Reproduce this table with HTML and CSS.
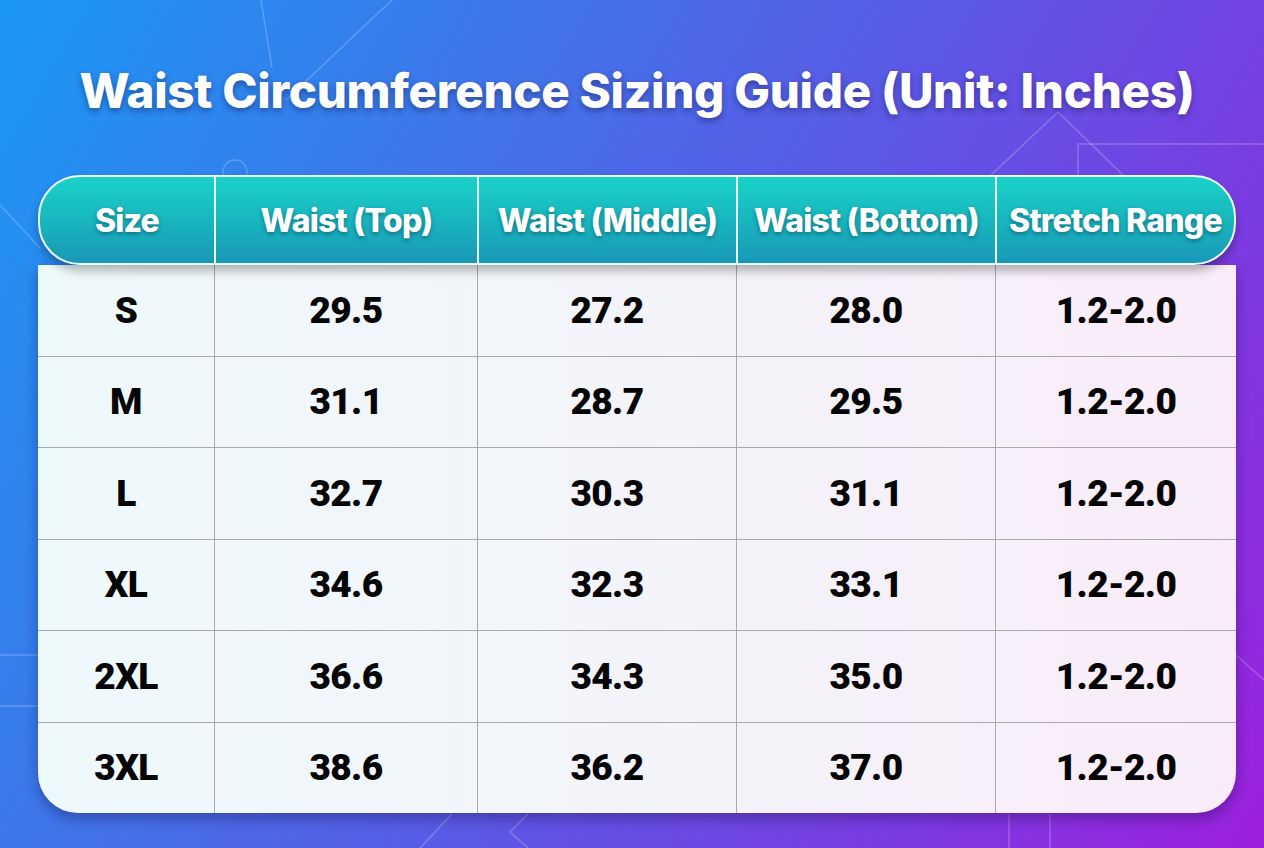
FILE: index.html
```html
<!DOCTYPE html>
<html lang="en">
<head>
<meta charset="utf-8">
<title>Waist Circumference Sizing Guide</title>
<link rel="stylesheet" href="styles.css">
</head>
<body>
<main class="page">
  <svg class="deco" width="1264" height="848" viewBox="0 0 1264 848" aria-hidden="true">
    <g fill="none" stroke="rgba(255,255,255,0.22)" stroke-width="1.5">
      <line x1="261" y1="0" x2="272" y2="68"/>
      <line x1="392" y1="0" x2="286" y2="100"/>
      <circle cx="235" cy="172" r="12"/>
      <line x1="0" y1="205" x2="40" y2="248"/>
      <line x1="0" y1="655" x2="38" y2="655"/>
      <line x1="0" y1="706" x2="38" y2="706"/>
      <polyline points="990,176 1058,112 1124,176"/>
      <polyline points="1078,176 1078,144 1264,144"/>
      <line x1="1236" y1="655" x2="1264" y2="680"/>
      <line x1="452" y1="814" x2="420" y2="848"/>
      <polyline points="528,814 510,832 528,848"/>
      <line x1="1009" y1="814" x2="1009" y2="848"/>
      <line x1="1050" y1="814" x2="1050" y2="848"/>
    </g>
  </svg>
  <h1 class="title">Waist Circumference Sizing Guide (Unit: Inches)</h1>
  <section class="chart">
    <div class="head">
      <div class="hcell">Size</div>
      <div class="hcell">Waist (Top)</div>
      <div class="hcell">Waist (Middle)</div>
      <div class="hcell">Waist (Bottom)</div>
      <div class="hcell">Stretch Range</div>
    </div>
    <div class="body">
      <div class="row"><div class="cell">S</div><div class="cell">29.5</div><div class="cell">27.2</div><div class="cell">28.0</div><div class="cell">1.2-2.0</div></div>
      <div class="row"><div class="cell">M</div><div class="cell">31.1</div><div class="cell">28.7</div><div class="cell">29.5</div><div class="cell">1.2-2.0</div></div>
      <div class="row"><div class="cell">L</div><div class="cell">32.7</div><div class="cell">30.3</div><div class="cell">31.1</div><div class="cell">1.2-2.0</div></div>
      <div class="row"><div class="cell">XL</div><div class="cell">34.6</div><div class="cell">32.3</div><div class="cell">33.1</div><div class="cell">1.2-2.0</div></div>
      <div class="row"><div class="cell">2XL</div><div class="cell">36.6</div><div class="cell">34.3</div><div class="cell">35.0</div><div class="cell">1.2-2.0</div></div>
      <div class="row"><div class="cell">3XL</div><div class="cell">38.6</div><div class="cell">36.2</div><div class="cell">37.0</div><div class="cell">1.2-2.0</div></div>
    </div>
  </section>
</main>
</body>
</html>
```
FILE: styles.css
```css
html, body {
  margin: 0;
  padding: 0;
}
body {
  width: 1264px;
  height: 848px;
  overflow: hidden;
  font-family: "Inter", "Open Sans", "Liberation Sans", sans-serif;
}
.page {
  position: relative;
  width: 1264px;
  height: 848px;
  box-sizing: border-box;
  padding: 0 28px 0 38px;
  display: flex;
  flex-direction: column;
  background: linear-gradient(120deg, #1a98f4 0%, #3f76ea 30%, #5c58e6 55%, #7a3ce2 78%, #9d20de 100%);
}
.deco {
  position: absolute;
  left: 0;
  top: 0;
}
.title {
  position: relative;
  margin: 0;
  height: 175px;
  box-sizing: border-box;
  padding-top: 61px;
  text-align: center;
  color: #ffffff;
  font-size: 47.5px;
  font-weight: 800;
  letter-spacing: -0.3px;
  line-height: 60px;
  text-shadow: 0 3px 6px rgba(20, 20, 70, 0.45);
}
.chart {
  position: relative;
  width: 1198px;
  display: flex;
  flex-direction: column;
}
.head {
  position: relative;
  z-index: 2;
  height: 90px;
  box-sizing: border-box;
  display: grid;
  grid-template-columns: 174px 263px 259px 259px 1fr;
  border: 2px solid #e9fbfb;
  border-radius: 42px;
  background: linear-gradient(180deg, #1ad2c8 0%, #18b6be 50%, #1998b8 100%);
  box-shadow: 0 6px 10px rgba(0, 0, 0, 0.28);
  overflow: hidden;
}
.hcell {
  display: flex;
  align-items: center;
  justify-content: center;
  color: #ffffff;
  font-size: 32px;
  font-weight: 800;
  letter-spacing: -0.8px;
  text-shadow: 0 2px 4px rgba(0, 40, 60, 0.45);
  border-left: 2px solid #e9fbfb;
  white-space: nowrap;
}
.hcell:first-child {
  border-left: none;
}
.body {
  display: flex;
  flex-direction: column;
  height: 548px;
  border-radius: 0 0 40px 40px;
  background: linear-gradient(90deg, #eef9fb 0%, #f3f4fa 50%, #f9ecf8 100%);
  box-shadow: 0 6px 14px rgba(20, 10, 60, 0.35);
  overflow: hidden;
}
.row {
  flex: 1;
  display: grid;
  grid-template-columns: 176px 263px 259px 259px 1fr;
  border-top: 1.5px solid #a9a9ad;
}
.row:first-child {
  border-top: none;
}
.cell {
  display: flex;
  align-items: center;
  justify-content: center;
  color: #050505;
  font-family: "Roboto", "Liberation Sans", sans-serif;
  font-size: 37px;
  font-weight: 900;
  letter-spacing: -0.6px;
  border-left: 1.5px solid #a9a9ad;
}
.cell:first-child {
  border-left: none;
}
```
